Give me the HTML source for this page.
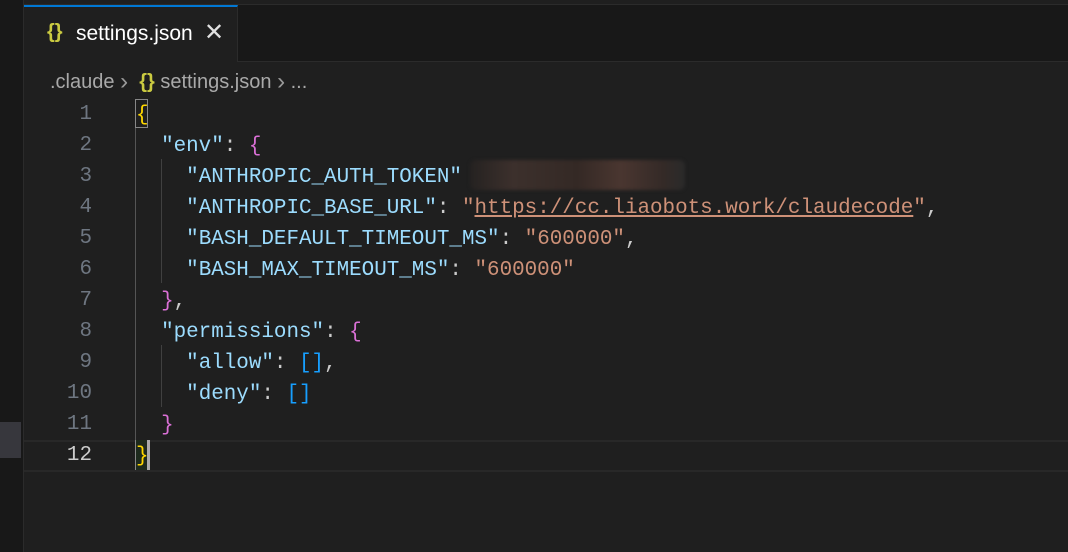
<!DOCTYPE html><html><head><style>
body{margin:0;width:1068px;height:552px;background:#1f1f1f;overflow:hidden;position:relative;font-family:"Liberation Sans",sans-serif}
.a{position:absolute}
.code{font-family:"Liberation Mono",monospace;font-size:20.9px;white-space:pre;line-height:31px}
.k{color:#9cdcfe}.s{color:#ce9178}.p{color:#cccccc}.g{color:#ffd700}.m{color:#da70d6}.b{color:#179fff}
.ln{width:70px;text-align:right;color:#6e7681;left:22px}
</style></head><body>
<div class="a" style="left:0;top:0;width:23px;height:552px;background:#181818;border-right:1px solid #2b2b2b"></div>
<div class="a" style="left:0;top:422px;width:21px;height:36px;background:#37373d"></div>
<div class="a" style="left:24px;top:0;width:1044px;height:4px;background:#1f1f1f;border-bottom:1px solid #2b2b2b"></div>
<div class="a" style="left:24px;top:5px;width:1044px;height:56px;background:#181818;border-bottom:1px solid #2b2b2b"></div>
<div class="a" style="left:24px;top:5px;width:214px;height:57px;background:#1f1f1f;border-top:2px solid #0078d4;border-right:1px solid #2b2b2b;box-sizing:border-box"></div>
<div class="a" style="left:47px;top:21px;font-size:20px;color:#cbcb41;font-weight:bold">{}</div>
<div class="a" style="left:76px;top:22px;font-size:21px;color:#ffffff">settings.json</div>
<div class="a" style="left:204px;top:18px;font-size:24px;color:#e0e0e0">✕</div>
<div class="a" style="left:50px;top:67px;font-size:20px;color:#a9a9a9;white-space:pre">.claude <span style="color:#999;font-size:24px;position:relative;top:1px">›</span>  <span style="color:#cbcb41;font-weight:bold">{}</span> settings.json <span style="color:#999;font-size:24px;position:relative;top:1px">›</span> ...</div>
<div class="a" style="left:24px;top:440px;width:1044px;height:28px;border-top:2px solid #282828;border-bottom:2px solid #282828"></div>
<div class="a" style="left:135px;top:99px;width:13px;height:29px;border:1px solid #888;box-sizing:border-box"></div>
<div class="a" style="left:135px;top:440px;width:15px;height:30px;background:#1d2a1d;border-left:1px solid #888;border-right:3px solid #aaa;box-sizing:border-box"></div>
<div class="a" style="left:135px;top:128px;width:1px;height:312px;background:#555"></div>
<div class="a" style="left:161px;top:159px;width:1px;height:124px;background:#404040"></div>
<div class="a" style="left:161px;top:345px;width:1px;height:62px;background:#404040"></div>
<div class="a code ln" style="top:99px">1
2
3
4
5
6
7
8
9
10
11
<span style="color:#cccccc">12</span></div>
<div class="a code" style="left:136px;top:100px"><span class="g">{</span>
  <span class="k">"env"</span><span class="p">: </span><span class="m">{</span>
    <span class="k">"ANTHROPIC_AUTH_TOKEN"</span>
    <span class="k">"ANTHROPIC_BASE_URL"</span><span class="p">: </span><span class="s">"<u>https://cc.liaobots.work/claudecode</u>"</span><span class="p">,</span>
    <span class="k">"BASH_DEFAULT_TIMEOUT_MS"</span><span class="p">: </span><span class="s">"600000"</span><span class="p">,</span>
    <span class="k">"BASH_MAX_TIMEOUT_MS"</span><span class="p">: </span><span class="s">"600000"</span>
  <span class="m">}</span><span class="p">,</span>
  <span class="k">"permissions"</span><span class="p">: </span><span class="m">{</span>
    <span class="k">"allow"</span><span class="p">: </span><span class="b">[]</span><span class="p">,</span>
    <span class="k">"deny"</span><span class="p">: </span><span class="b">[]</span>
  <span class="m">}</span>
<span class="g">}</span></div>
<div class="a" style="left:470px;top:160px;width:215px;height:30px;background:linear-gradient(90deg,#252221,#3c302c 20%,#342925 50%,#4a3630 70%,#342a27 90%,#2a2a2a);filter:blur(1.5px);border-radius:6px"></div>
</body></html>
